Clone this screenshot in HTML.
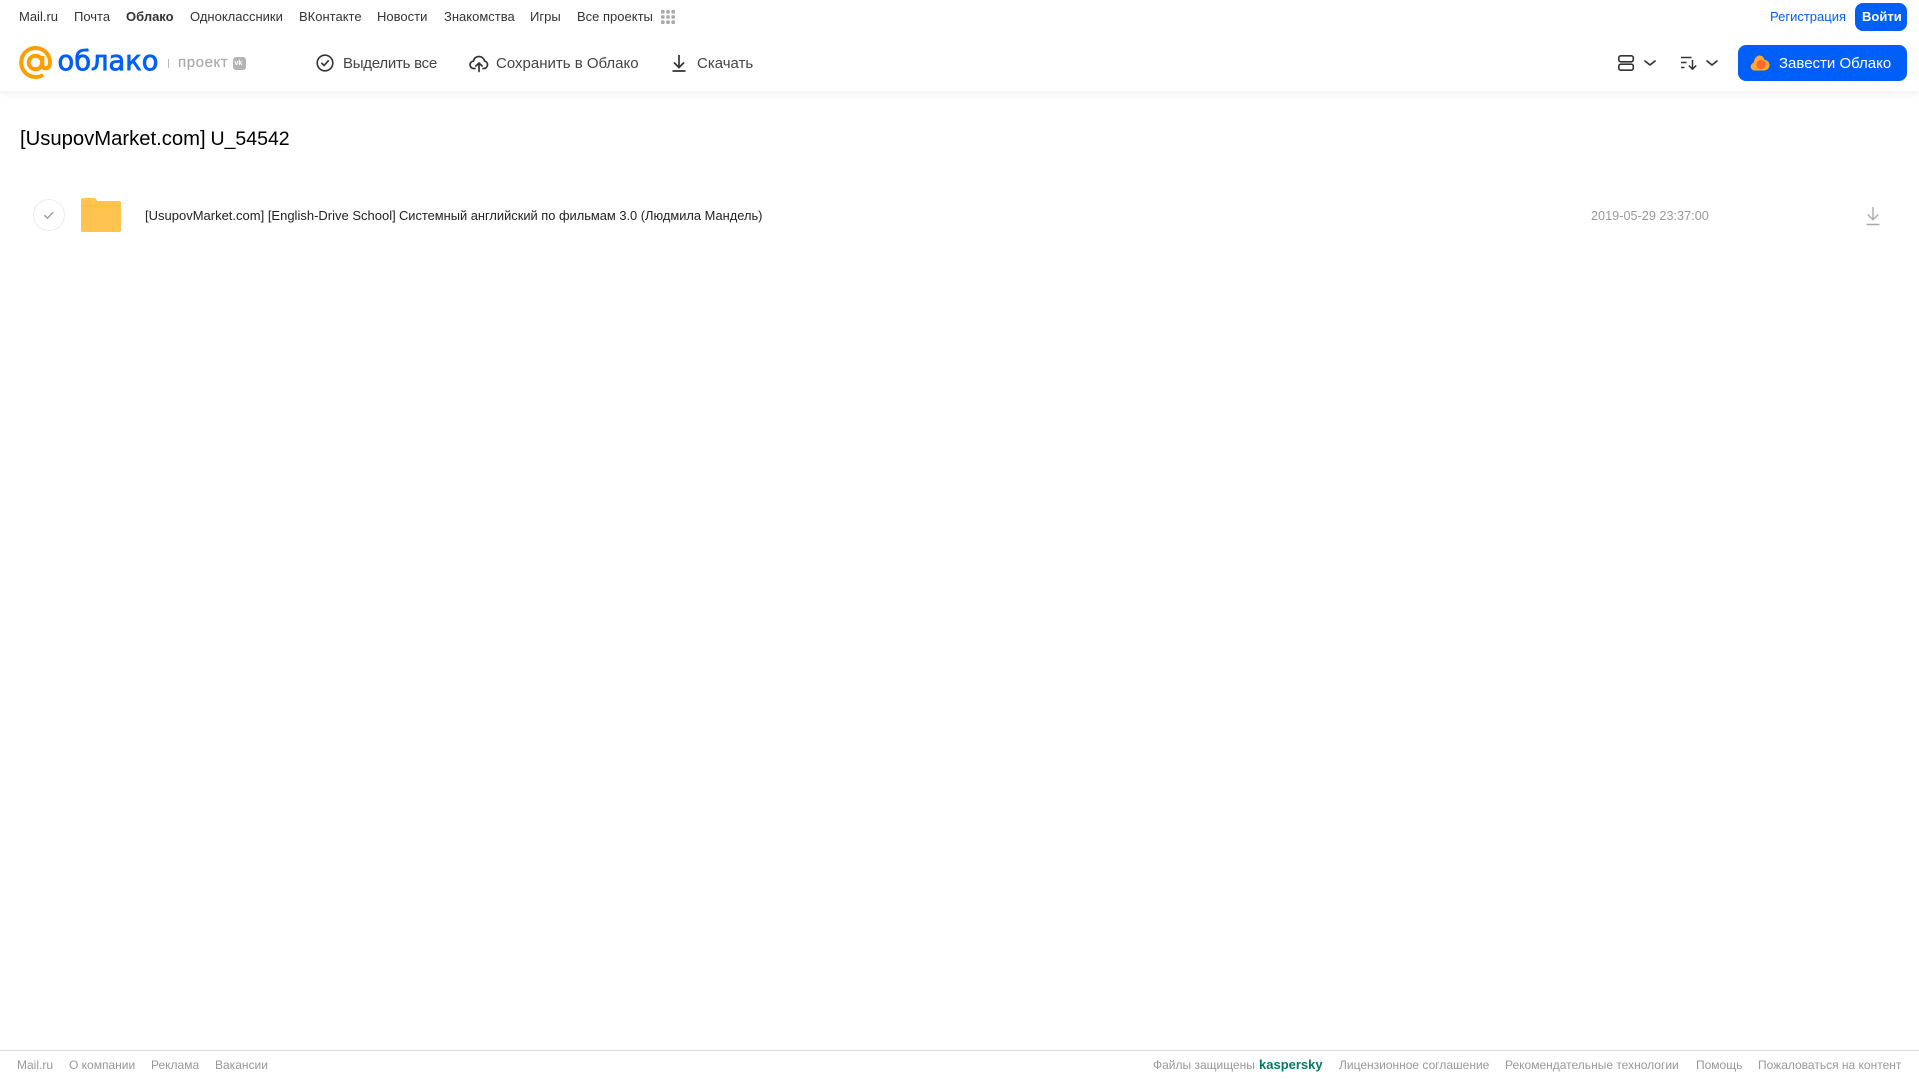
<!DOCTYPE html>
<html lang="ru"><head><meta charset="utf-8"><title>Облако</title>
<style>
html,body{margin:0;padding:0;background:#fff}
body{position:relative;width:1919px;height:1079px;overflow:hidden;font-family:"Liberation Sans",Arial,sans-serif}
.t{position:absolute;white-space:nowrap;line-height:20px}
.n{font-size:13px;color:#333;top:7px}
.b{font-size:15px;color:#444;top:54px}
.f{font-size:12px;color:#999;top:1055px}
svg{position:absolute;display:block}
</style></head><body>
<div style="position:absolute;left:0;top:0;width:1919px;height:91px;background:#fff;box-shadow:0 2px 8px rgba(0,0,0,.07)"></div>

<span class="t n" style="left:19px">Mail.ru</span>
<span class="t n" style="left:74px">Почта</span>
<span class="t n" style="left:126px;font-weight:bold">Облако</span>
<span class="t n" style="left:190px">Одноклассники</span>
<span class="t n" style="left:299px">ВКонтакте</span>
<span class="t n" style="left:377px">Новости</span>
<span class="t n" style="left:444px">Знакомства</span>
<span class="t n" style="left:530px">Игры</span>
<span class="t n" style="left:577px">Все проекты</span>
<svg style="left:660px;top:9px" width="16" height="16" fill="#aaa"><rect x="1" y="1" width="3.6" height="3.6" rx="1"/><rect x="6.2" y="1" width="3.6" height="3.6" rx="1"/><rect x="11.4" y="1" width="3.6" height="3.6" rx="1"/><rect x="1" y="6.2" width="3.6" height="3.6" rx="1"/><rect x="6.2" y="6.2" width="3.6" height="3.6" rx="1"/><rect x="11.4" y="6.2" width="3.6" height="3.6" rx="1"/><rect x="1" y="11.4" width="3.6" height="3.6" rx="1"/><rect x="6.2" y="11.4" width="3.6" height="3.6" rx="1"/><rect x="11.4" y="11.4" width="3.6" height="3.6" rx="1"/></svg>

<span class="t n" style="left:1770px;color:#005ff9">Регистрация</span>
<div style="position:absolute;left:1855px;top:3px;width:52px;height:28px;background:#005ff9;border-radius:8px"></div>
<span class="t n" style="left:1862px;color:#fff;font-weight:bold">Войти</span>

<svg style="left:18px;top:46px" width="36" height="34" viewBox="0 0 36 34" fill="none" stroke="#ff9e00" stroke-width="4"><circle cx="17.5" cy="16.5" r="6.8"/><path d="M24.300 10v8.700c0 2.400 1.400 3.700 3.200 3.700 2.900 0 4.500-2.600 4.500-6 0-8-6.500-14.400-14.500-14.400C9.500 2 3.200 8.500 3.200 16.500c0 8 6.300 14.500 14.300 14.500 3 0 5.500-.7 7.700-2.100"/></svg>
<span class="t" style="left:57.500px;top:45px;line-height:34px;font-family:'DejaVu Sans',sans-serif;font-size:27.300px;color:#005ff9;-webkit-text-stroke:.8px #005ff9">облако</span>
<div style="position:absolute;left:168px;top:59px;width:1px;height:9px;background:#bbb"></div>
<span class="t" style="left:178px;top:53px;font-size:15px;color:#aaa;-webkit-text-stroke:.2px #aaa;letter-spacing:.6px">проект</span>
<div style="position:absolute;left:233px;top:57px;width:13px;height:13px;background:#b4b4b4;border-radius:3px"></div>
<span class="t" style="left:234.500px;top:53.500px;font-size:7px;font-weight:bold;color:#fff">vk</span>

<svg style="left:315px;top:53px" width="20" height="20" fill="none" stroke="#333" stroke-width="1.600"><circle cx="10" cy="10" r="7.800"/><path d="M6.800 10.200l2.300 2.300 4.200-4.700" stroke-linecap="round" stroke-linejoin="round"/></svg>
<span class="t b" style="left:343px;letter-spacing:-.25px">Выделить все</span>
<svg style="left:468.500px;top:53px" width="20" height="20" fill="none" stroke="#333" stroke-width="1.700" stroke-linecap="round" stroke-linejoin="round"><path d="M6 15.500H5A3.700 3.700 0 0 1 4.500 8.100C5 5.200 7.300 3.500 10 3.500c2.700 0 4.900 1.800 5.500 4.500a3.800 3.800 0 0 1-.5 7.500h-1"/><path d="M10 18.500v-8M6.900 13l3.100-3 3.100 3"/></svg>
<span class="t b" style="left:496px">Сохранить в Облако</span>
<svg style="left:669px;top:53px" width="20" height="20" fill="none" stroke="#333" stroke-width="1.700"><path d="M10 2v12M5 9.500l5 5 5-5M3.500 18h13"/></svg>
<span class="t b" style="left:697px">Скачать</span>

<svg style="left:1617px;top:54px" width="18" height="18" fill="none" stroke="#333" stroke-width="1.600"><rect x="1.800" y="1.800" width="14.500" height="6" rx="2"/><rect x="1.800" y="10.200" width="14.500" height="6" rx="2"/></svg>
<svg style="left:1643px;top:58px" width="14" height="10" fill="none" stroke="#333" stroke-width="1.700" stroke-linecap="round" stroke-linejoin="round"><path d="M2 3l5 4 5-4"/></svg>
<svg style="left:1680px;top:54px" width="18" height="18" fill="none" stroke="#333" stroke-width="1.500"><path d="M1 3.500h10.500M1 8.500h5.500M1 13.500h3.500M12.500 6v9M8.800 11.500l3.700 3.700 3.700-3.700"/></svg>
<svg style="left:1705px;top:58px" width="14" height="10" fill="none" stroke="#333" stroke-width="1.700" stroke-linecap="round" stroke-linejoin="round"><path d="M2 3l5 4 5-4"/></svg>

<div style="position:absolute;left:1738px;top:45px;width:169px;height:36px;background:#005ff9;border-radius:8px"></div>
<svg style="left:1750px;top:54px" width="20" height="18"><path d="M4.500 16.500A4 4 0 0 1 3.800 8.600C4.300 4.800 6.500 1.500 9.500 1.500c2.700 0 4.300 2 5 4.300 2.800.3 5 2.500 5 5.500 0 3-2.400 5.200-5.200 5.200z" fill="#ffa930"/><circle cx="11" cy="10.500" r="4.600" fill="#ff6a2a"/></svg>
<span class="t b" style="left:1779px;color:#fff">Завести Облако</span>

<span class="t" style="left:20px;top:127px;line-height:24px;font-size:20.250px;color:#000">[UsupovMarket.com]</span>
<span class="t" style="left:210.500px;top:127px;line-height:24px;font-size:19.500px;color:#000">U_54542</span>

<svg style="left:33px;top:199px" width="32" height="32" fill="none"><circle cx="16" cy="16" r="15.500" stroke="#ececec"/><path d="M11.500 16.300l3 3 5.500-6" stroke="#999" stroke-width="1.400"/></svg>
<svg style="left:81px;top:198px" width="40" height="34"><path d="M2 0h11c1.500 0 2.500 1 3 3h22a2 2 0 0 1 2 2v27a2 2 0 0 1-2 2H2a2 2 0 0 1-2-2V2a2 2 0 0 1 2-2z" fill="#ffc44f"/><path d="M0 8h40" stroke="#ffb83a" stroke-width="1"/></svg>
<span class="t" style="left:145px;top:206px;font-size:13px;color:#222">[UsupovMarket.com] [English-Drive School]</span>
<span class="t" style="left:399px;top:206px;font-size:12.870px;color:#222">Системный английский по фильмам 3.0 (Людмила Мандель)</span>
<span class="t" style="left:1591px;top:206px;font-size:12.700px;color:#999">2019-05-29 23:37:00</span>
<svg style="left:1864px;top:206px" width="18" height="20" fill="none" stroke="#aaa" stroke-width="1.400"><path d="M9 1v12.500M3.800 8.500L9 13.700l5.200-5.200M2.500 18.500h13"/></svg>

<div style="position:absolute;left:0;top:1050px;width:1919px;height:1px;background:#d9d9d9"></div>
<span class="t f" style="left:17px">Mail.ru</span>
<span class="t f" style="left:69px">О компании</span>
<span class="t f" style="left:151px">Реклама</span>
<span class="t f" style="left:215px">Вакансии</span>
<span class="t f" style="left:1153px">Файлы защищены</span>
<span class="t" style="left:1259px;top:1055px;font-size:13px;font-weight:bold;color:#007a67">kaspersky</span>
<span class="t f" style="left:1339px">Лицензионное соглашение</span>
<span class="t f" style="left:1505px">Рекомендательные технологии</span>
<span class="t f" style="left:1696px">Помощь</span>
<span class="t f" style="left:1758px">Пожаловаться на контент</span>
</body></html>
